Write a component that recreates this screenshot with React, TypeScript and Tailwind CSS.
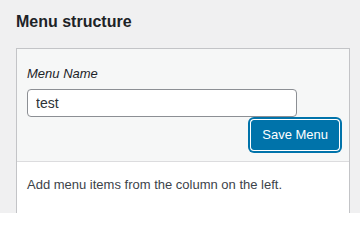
export default function App() {
  return (
    <div className="h-[213px] overflow-hidden bg-[#f0f0f1] px-4 pt-[11px] font-['Liberation_Sans',Arial,sans-serif] text-[#3c434a]">
      <h2 className="text-[16px] leading-[22px] font-semibold text-[#1d2327]">Menu structure</h2>
      <div className="mt-[15px] w-[334px] border border-[#c3c4c7] bg-white">
        <div className="border-b border-[#dcdcde] bg-[#f6f7f7] px-[10px] pt-[15px] pb-[11px]">
          <label className="block text-[13px] leading-[20px] italic text-[#1d2327]">Menu Name</label>
          <input
            defaultValue="test"
            className="mt-[5px] block h-[28px] w-[270px] rounded-[4px] border border-[#8c8f94] bg-white px-2 text-[14px] text-[#2c3338] outline-none"
          />
          <div className="mt-[3px] flex justify-end">
            <button className="h-[30px] rounded-[3px] border border-[#0073aa] bg-[#0073aa] px-[10px] text-[13px] text-white shadow-[0_0_0_1px_#fff,0_0_0_3px_#0073aa]">
              Save Menu
            </button>
          </div>
        </div>
        <div className="px-[10px] pt-[13px] pb-6 text-[13px] leading-[20px] text-[#3c434a]">
          Add menu items from the column on the left.
        </div>
      </div>
    </div>
  );
}
